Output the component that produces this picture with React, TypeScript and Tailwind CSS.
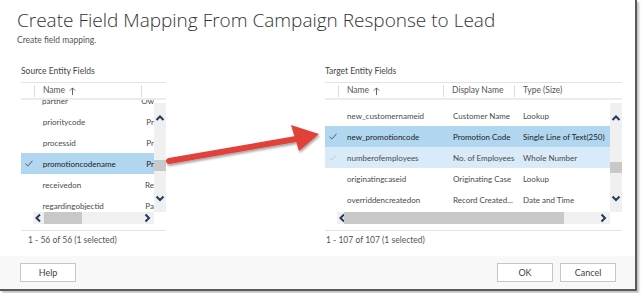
import React from 'react'

const FONT = { fontFamily: 'Lato, "Open Sans", Arial, sans-serif' }
const TITLE_FONT = { fontFamily: '"Open Sans", "Noto Sans", Arial, sans-serif' }

const LEFT_ROWS = [
  { name: 'partner', col: 'Ow' },
  { name: 'prioritycode', col: 'Pr' },
  { name: 'processid', col: 'Pr' },
  { name: 'promotioncodename', col: 'Pr', selected: true },
  { name: 'receivedon', col: 'Re' },
  { name: 'regardingobjectid', col: 'Pa' },
]

const RIGHT_ROWS = [
  { name: 'new_customernameid', display: 'Customer Name', type: 'Lookup' },
  { name: 'new_promotioncode', display: 'Promotion Code', type: 'Single Line of Text(250)', state: 'selected' },
  { name: 'numberofemployees', display: 'No. of Employees', type: 'Whole Number', state: 'hover' },
  { name: 'originatingcaseid', display: 'Originating Case', type: 'Lookup' },
  { name: 'overriddencreatedon', display: 'Record Created...', type: 'Date and Time' },
]

function Chevron({ dir }: { dir: 'up' | 'down' | 'left' | 'right' }) {
  const d = {
    up: 'M1.5 6 L5 2.5 L8.5 6',
    down: 'M1.5 3.5 L5 7 L8.5 3.5',
    left: 'M6 1.5 L2.5 5 L6 8.5',
    right: 'M3.5 1.5 L7 5 L3.5 8.5',
  }[dir]
  return (
    <svg width="10" height="10" viewBox="0 0 10 10" className="block">
      <path d={d} fill="none" stroke="#1f3b5c" strokeWidth="2" />
    </svg>
  )
}

function Check({ light }: { light?: boolean }) {
  return (
    <svg width="8" height="7" viewBox="0 0 8 7" className="block">
      <path d="M0.5 3.8 L2.8 6 L7.5 0.8" fill="none" stroke={light ? '#b9c6d2' : '#4a4a4a'} strokeWidth="0.9" />
    </svg>
  )
}

function SortUp() {
  return (
    <svg width="7" height="8" viewBox="0 0 7 8" className="block">
      <path d="M3.5 8 V1 M0.8 3.6 L3.5 0.9 L6.2 3.6" fill="none" stroke="#555" strokeWidth="0.9" />
    </svg>
  )
}

function VScroll({ thumbTop }: { thumbTop: number }) {
  return (
    <div className="relative w-[12px] h-full bg-[#f0f0f0]">
      <div className="absolute left-[1px] top-[11px]"><Chevron dir="up" /></div>
      <div className="absolute left-0 w-[12px] h-[11px] bg-[#c8c8c8]" style={{ top: thumbTop }} />
      <div className="absolute left-[1px] bottom-[9px]"><Chevron dir="down" /></div>
    </div>
  )
}

function HScroll({ thumbLeft, thumbWidth }: { thumbLeft: number; thumbWidth: number }) {
  return (
    <div className="flex h-[12px]">
      <div className="w-[12px] bg-white" />
      <div className="relative flex-1 bg-[#f0f0f0] flex items-center justify-between px-[1px]">
        <Chevron dir="left" />
        <div className="absolute top-0 h-[12px] bg-[#c8c8c8]" style={{ left: thumbLeft, width: thumbWidth }} />
        <div className="mr-[1px]"><Chevron dir="right" /></div>
      </div>
      <div className="w-[12px] bg-white" />
    </div>
  )
}

export default function App() {
  return (
    <div className="relative w-[641px] h-[293px] bg-white overflow-hidden text-[#4a4a4a]" style={FONT}>
      <div className="flex flex-col w-[637px] h-[291px] border-r-2 border-b-2 border-[#5a5a5a] shadow-[2px_2px_2px_rgba(0,0,0,0.25)]">
        {/* Header */}
        <div className="px-[17px] pt-[7px]">
          <h1 className="text-[19px] font-light leading-[26px] text-[#333]" style={TITLE_FONT}>
            Create Field Mapping From Campaign Response to Lead
          </h1>
          <p className="text-[8.5px] leading-[12px] text-[#555] mt-[1px]">Create field mapping.</p>
        </div>

        {/* Grids */}
        <div className="flex pt-[20px]">
          {/* Source */}
          <div className="ml-[21px] w-[145px]">
            <div className="text-[8.5px] leading-[10px] text-[#444] mb-[6px]">Source Entity Fields</div>
            <div className="border-t border-[#e3e3e3]">
              <div className="flex items-center h-[17px] border-b-[2px] border-[#ececec] text-[8.5px] text-[#555]">
                <div className="w-[14px] h-[12px] border-r border-[#ddd]" />
                <div className="pl-[8px] w-[107px] h-[12px] border-r border-[#ddd] flex items-center gap-[4px] whitespace-nowrap">
                  Name <SortUp />
                </div>
              </div>
              <div className="flex h-[112px] overflow-hidden">
                <div className="w-[133px] overflow-hidden">
                  <div className="mt-[-10px]">
                    {LEFT_ROWS.map(r => (
                      <div
                        key={r.name}
                        className={`flex items-center h-[21px] text-[8px] ${r.selected ? 'bg-[#b1d6f0] text-[#222]' : ''}`}>
                        <div className="w-[22px] pl-[4px]">{r.selected && <Check />}</div>
                        <div className="w-[105px] whitespace-nowrap">{r.name}</div>
                        <div className="whitespace-nowrap">{r.col}</div>
                      </div>
                    ))}
                  </div>
                </div>
                <div className="pt-[3px] h-full">
                  <VScroll thumbTop={57} />
                </div>
              </div>
              <HScroll thumbLeft={11} thumbWidth={38} />
            </div>
            <div className="mt-[6px] border-t border-[#e3e3e3] pt-[3px] pl-[7px] text-[8.5px] leading-[12px] text-[#555]">
              1 - 56 of 56 (1 selected)
            </div>
          </div>

          {/* Target */}
          <div className="ml-[159px] w-[297px]">
            <div className="text-[8.5px] leading-[10px] text-[#444] mb-[6px]">Target Entity Fields</div>
            <div className="border-t border-[#e3e3e3]">
              <div className="flex items-center h-[17px] border-b-[2px] border-[#ececec] text-[8.5px] text-[#555] whitespace-nowrap">
                <div className="w-[14px] h-[12px] border-r border-[#ddd]" />
                <div className="pl-[8px] w-[105px] h-[12px] border-r border-[#ddd] flex items-center gap-[4px]">
                  Name <SortUp />
                </div>
                <div className="pl-[8px] w-[71px] h-[12px] border-r border-[#ddd] flex items-center">Display Name</div>
                <div className="pl-[8px] h-[12px] flex items-center">Type (Size)</div>
              </div>
              <div className="flex h-[112px] overflow-hidden">
                <div className="w-[285px] pt-[5px]">
                  {RIGHT_ROWS.map(r => (
                    <div
                      key={r.name}
                      className={`flex items-center h-[21px] text-[8px] whitespace-nowrap ${
                        r.state === 'selected' ? 'bg-[#b1d6f0] text-[#222]' : r.state === 'hover' ? 'bg-[#d9ebf8]' : ''
                      }`}>
                      <div className="w-[22px] pl-[4px]">
                        {r.state === 'selected' && <Check />}
                        {r.state === 'hover' && <Check light />}
                      </div>
                      <div className="w-[106px]">{r.name}</div>
                      <div className="w-[70px]">{r.display}</div>
                      <div>{r.type}</div>
                    </div>
                  ))}
                </div>
                <div className="pt-[3px] h-full">
                  <VScroll thumbTop={59} />
                </div>
              </div>
              <HScroll thumbLeft={7} thumbWidth={220} />
            </div>
            <div className="mt-[6px] border-t border-[#e3e3e3] pt-[3px] pl-[1px] text-[8.5px] leading-[12px] text-[#555]">
              1 - 107 of 107 (1 selected)
            </div>
          </div>
        </div>

        {/* Footer */}
        <div className="mt-auto h-[33px] bg-[#f8f8f8] flex items-center justify-between pl-[20px] pr-[19px]">
          <button className="w-[56px] h-[19px] bg-white border border-[#c6c6c6] text-[9px] text-[#444]">Help</button>
          <div className="flex gap-[7px]">
            <button className="w-[56px] h-[19px] bg-white border border-[#c6c6c6] text-[9px] text-[#444]">OK</button>
            <button className="w-[56px] h-[19px] bg-white border border-[#c6c6c6] text-[9px] text-[#444]">Cancel</button>
          </div>
        </div>
      </div>

      {/* Red arrow overlay */}
      <svg className="absolute left-[160px] top-[122px]" width="170" height="50" viewBox="0 0 170 50">
        <defs>
          <filter id="sh" x="-10%" y="-30%" width="120%" height="160%">
            <feDropShadow dx="1" dy="2" stdDeviation="1.2" floodColor="#000" floodOpacity="0.35" />
          </filter>
        </defs>
        <g filter="url(#sh)">
          <line x1="9" y1="39" x2="136" y2="17" stroke="#e2413a" strokeWidth="6" strokeLinecap="round" />
          <path d="M159 12 L131 3 L139 29 Z" fill="#e2413a" />
        </g>
      </svg>
    </div>
  )
}
